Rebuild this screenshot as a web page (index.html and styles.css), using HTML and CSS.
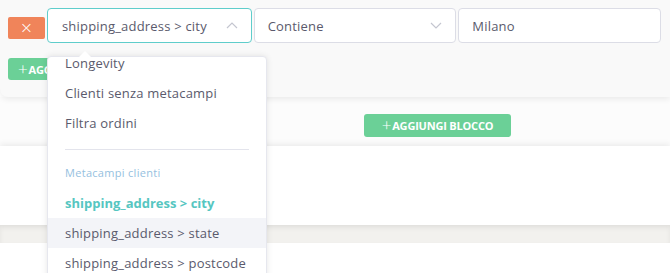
FILE: index.html
```html
<!DOCTYPE html>
<html lang="it">
<head>
<meta charset="utf-8">
<link rel="stylesheet" href="styles.css">
</head>
<body>
<div class="page">
  <div class="card">
    <div class="cond-row">
      <button class="btn-remove">×</button>
      <div class="field field-active">
        <span class="field-text">shipping_address &gt; city</span>
        <svg class="chev" width="12" height="7" viewBox="0 0 12 7"><path d="M1 6 L6 1 L11 6" fill="none" stroke="#c4c6d0" stroke-width="1.2"/></svg>
      </div>
      <div class="field">
        <span class="field-text">Contiene</span>
        <svg class="chev" width="12" height="7" viewBox="0 0 12 7"><path d="M1 1 L6 6 L11 1" fill="none" stroke="#c4c6d0" stroke-width="1.2"/></svg>
      </div>
      <div class="field field-input">
        <span class="field-text">Milano</span>
      </div>
    </div>
    <button class="btn-add btn-add-cond"><span class="plus">+</span>AGGIUNGI CONDIZIONE</button>
  </div>
  <div class="block-bar">
    <button class="btn-add"><span class="plus">+</span>AGGIUNGI BLOCCO</button>
  </div>
  <div class="empty-box"></div>
  <div class="strip"></div>
  <div class="bottom"></div>

  <div class="dropdown">
    <div class="notch"></div>
    <div class="dd-scroll">
      <ul class="dd-list">
        <li class="dd-item">Longevity</li>
        <li class="dd-item">Clienti senza metacampi</li>
        <li class="dd-item">Filtra ordini</li>
        <li class="dd-divider"></li>
        <li class="dd-header">Metacampi clienti</li>
        <li class="dd-item dd-selected">shipping_address &gt; city</li>
        <li class="dd-item dd-hover">shipping_address &gt; state</li>
        <li class="dd-item">shipping_address &gt; postcode</li>
      </ul>
    </div>
  </div>
</div>
</body>
</html>
```
FILE: styles.css
```css
* { box-sizing: border-box; }
html, body { margin: 0; padding: 0; }
body {
  background: #ffffff;
  font-family: "Open Sans", "Noto Sans", sans-serif;
  color: #5a5a6c;
  width: 670px;
  height: 273px;
  overflow: hidden;
}
.page { position: relative; height: 273px; }

.card {
  height: 97px;
  background: #f9f9f9;
  border-radius: 0 0 0 8px;
  padding: 8px 9px 0 8px;
  box-shadow: 0 2px 6px rgba(0,0,0,0.08);
  position: relative;
  z-index: 2;
}
.cond-row { display: flex; gap: 2px; align-items: flex-start; }
.btn-remove {
  width: 37px; height: 22px; margin-top: 9px;
  background: #f0845a; color: #fff; border: none; border-radius: 2px;
  font-size: 16px; line-height: 22px; padding: 0;
  font-family: "DejaVu Sans", sans-serif; font-weight: 200;
}
.field {
  width: 203px; height: 35px;
  background: #fff;
  border: 1px solid #dcdde6;
  border-radius: 4px;
  display: flex; align-items: center; justify-content: space-between;
  padding: 0 13px 0 13px;
  font-size: 13px;
  letter-spacing: 0.2px;
}
.field-active { width: 205px; border-color: #5fcdcb; padding-left: 14px; }
.field-input { padding-left: 13px; }
.chev { flex: none; }
.btn-add {
  height: 23px;
  background: #6bd097; color: #fff; border: none; border-radius: 3px;
  font-family: "Open Sans", sans-serif; font-weight: 700; font-size: 11px;
  padding: 0 12px 0 12px;
  display: inline-flex; align-items: center; gap: 1px; letter-spacing: -0.2px;
}
.btn-add .plus { font-size: 17px; font-weight: 300; line-height: 1; margin-top: -2px; }
.btn-add-cond { margin-top: 15px; height: 22px; padding-left: 10px; }

.block-bar {
  height: 49px;
  background: #fcfcfc;
  padding: 17px 0 0 364px;
  position: relative; z-index: 1;
}
.block-bar .btn-add { width: 147px; justify-content: center; padding: 0; }
.empty-box {
  height: 79px;
  background: #fff;
  box-shadow: 0 -2px 6px rgba(0,0,0,0.07);
  position: relative; z-index: 1;
}
.strip {
  height: 18px;
  background: #f2f1ee;
  box-shadow: inset 0 3px 5px rgba(0,0,0,0.06);
}
.bottom { height: 30px; background: #fff; }

.dropdown {
  position: absolute;
  left: 47px; top: 56px;
  width: 220px; height: 230px;
  background: #fff;
  border: 1px solid #e6e7ee;
  border-radius: 4px;
  box-shadow: 0 0 6px rgba(0,0,0,0.10);
  z-index: 5;
}
.notch {
  position: absolute; left: 31px; top: -6px;
  width: 0; height: 0;
  border-left: 6px solid transparent; border-right: 6px solid transparent;
  border-bottom: 6px solid #fff;
}
.dd-scroll { overflow: hidden; height: 100%; border-radius: 4px; }
.dd-list { list-style: none; margin: -9px 0 0 0; padding: 0; }
.dd-item {
  height: 30px; line-height: 30px;
  padding-left: 17px;
  font-size: 13px;
  color: #5a5a6c;
  white-space: nowrap;
  letter-spacing: 0.2px;
}
.dd-divider { height: 1px; background: #e3e4ec; margin: 11px 17px 0 17px; }
.dd-header {
  height: 38px; line-height: 46px;
  padding-left: 17px;
  font-size: 11px;
  color: #96bfe0;
  letter-spacing: 0.3px;
}
.dd-selected { color: #56c6c1; font-weight: 700; letter-spacing: 0; }
.dd-hover { background: #f3f4f8; }
```
